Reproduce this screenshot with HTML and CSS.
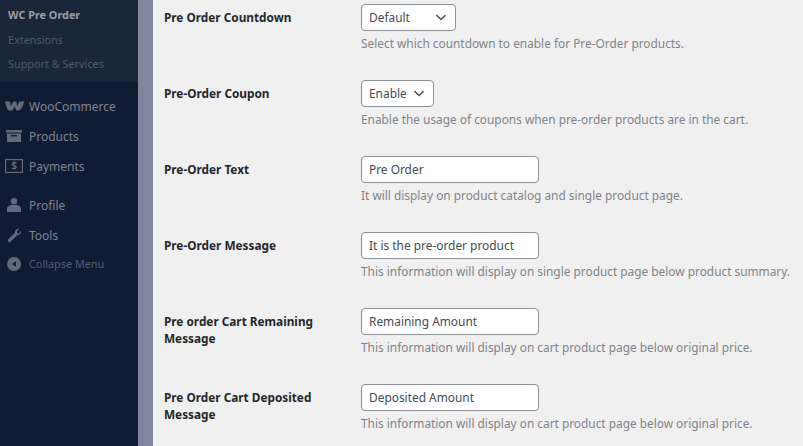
FILE: index.html
```
<!DOCTYPE html>
<html lang="en">
<head>
<meta charset="utf-8">
<title>WC Pre Order</title>
<link rel="stylesheet" href="styles.css">
</head>
<body>
<div class="page">
  <nav class="sidebar">
    <ul class="submenu">
      <li class="sub current">WC Pre Order</li>
      <li class="sub">Extensions</li>
      <li class="sub">Support &amp; Services</li>
    </ul>
    <ul class="menu first">
      <li class="item"><span class="ico"><svg width="19" height="10" viewBox="0 0 19 10"><path d="M0 .5h5l.8 4.800L8.300.5h3l.9 4.800L14.500.5H19c-.5 4-3 9-5.500 9h-2.300l-1.300-4-2.600 4H4.800c-1.800 0-2.500-1-3-3z" fill="#636b7b"/></svg></span>WooCommerce</li>
      <li class="item"><span class="ico"><svg width="16" height="12" viewBox="0 0 16 12"><path d="M0 0h16v2.500H0zM1 3.500h14V12H1zm4 1.500v1.500h6V5z" fill="#636b7b" fill-rule="evenodd"/></svg></span>Products</li>
      <li class="item"><span class="ico"><svg width="18" height="14" viewBox="0 0 18 14"><rect x=".6" y=".6" width="16.800" height="12.800" fill="none" stroke="#636b7b" stroke-width="1.200"/></svg><span class="dollar">$</span></span>Payments</li>
    </ul>
    <ul class="menu">
      <li class="item"><span class="ico"><svg width="14" height="14" viewBox="0 0 14 14"><circle cx="7" cy="3.300" r="3.200" fill="#636b7b"/><path d="M0 14v-3C0 8 3 7 4.500 7h5C11 7 14 8 14 11v3z" fill="#636b7b"/></svg></span>Profile</li>
      <li class="item"><span class="ico"><svg width="15" height="15" viewBox="0 0 16 16"><path d="M15 3.200c.5 2-1.300 4.600-4 4.200L4 14.500c-.8.800-2 .800-2.700.100s-.6-1.900.2-2.700l7.100-6.900C8 2.300 10.800.300 13 1l-2.500 2.500.4 1.900 1.800.4z" fill="#636b7b"/></svg></span>Tools</li>
      <li class="item collapse"><span class="ico"><svg width="14" height="14" viewBox="0 0 14 14"><circle cx="7" cy="7" r="7" fill="#636b7b"/><path d="M9 4.200v5.600L4.800 7z" fill="#101c33"/></svg></span>Collapse Menu</li>
    </ul>
  </nav>
  <div class="strip"></div>
  <main class="content">
    <div class="row">
      <div class="label">Pre Order Countdown</div>
      <div class="field">
        <div class="select wide"><span>Default</span><svg width="12" height="7" viewBox="0 0 12 7"><path d="M1.500 1.200 6 5.500l4.500-4.300" fill="none" stroke="#50575e" stroke-width="1.600"/></svg></div>
        <p class="desc">Select which countdown to enable for Pre-Order products.</p>
      </div>
    </div>
    <div class="row">
      <div class="label">Pre-Order Coupon</div>
      <div class="field">
        <div class="select narrow"><span>Enable</span><svg width="12" height="7" viewBox="0 0 12 7"><path d="M1.500 1.200 6 5.500l4.500-4.300" fill="none" stroke="#50575e" stroke-width="1.600"/></svg></div>
        <p class="desc">Enable the usage of coupons when pre-order products are in the cart.</p>
      </div>
    </div>
    <div class="row">
      <div class="label">Pre-Order Text</div>
      <div class="field">
        <input class="input" type="text" value="Pre Order">
        <p class="desc">It will display on product catalog and single product page.</p>
      </div>
    </div>
    <div class="row">
      <div class="label">Pre-Order Message</div>
      <div class="field">
        <input class="input" type="text" value="It is the pre-order product">
        <p class="desc">This information will display on single product page below product summary.</p>
      </div>
    </div>
    <div class="row">
      <div class="label">Pre order Cart Remaining Message</div>
      <div class="field">
        <input class="input" type="text" value="Remaining Amount">
        <p class="desc">This information will display on cart product page below original price.</p>
      </div>
    </div>
    <div class="row">
      <div class="label">Pre Order Cart Deposited Message</div>
      <div class="field">
        <input class="input" type="text" value="Deposited Amount">
        <p class="desc">This information will display on cart product page below original price.</p>
      </div>
    </div>
  </main>
</div>
</body>
</html>
```
FILE: styles.css
```
* { box-sizing: border-box; }
html, body { margin: 0; padding: 0; height: 446px; overflow: hidden; }
body { font-family: "Noto Sans", "Open Sans", sans-serif; font-size: 12px; color: #2c3338; background: #f0f0f1; }
.page { display: flex; height: 446px; }
.sidebar { width: 138px; flex: none; background: #101c33; color: #8b919b; }
ul { list-style: none; margin: 0; padding: 0; }
.submenu { height: 82px; background: #1a2639; padding-top: 3px; }
.sub { height: 24.500px; line-height: 24px; padding-left: 8px; font-size: 10.850px; color: #4e586a; }
.sub.current { color: #9a9fa7; font-weight: 700; }
.menu { padding-top: 9px; }
.menu.first { padding-top: 9px; }
.menu + .menu { padding-top: 9px; }
.item { display: flex; align-items: center; height: 30px; font-size: 12px; color: #7f858f; }
.ico { position: relative; width: 29px; flex: none; display: flex; justify-content: center; padding-right: 1px; }
.dollar { position: absolute; left: 0; width: 28px; top: -1px; text-align: center; font-size: 10px; font-weight: 700; color: #636b7b; }
.collapse { font-size: 10.850px; color: #545c6b; height: 27px; }
.strip { width: 15px; flex: none; background: #7f869c; }
.content { flex: 1; padding: 4px 0 0 11px; min-width: 0; }
.row { display: flex; height: 76px; }
.label { width: 197px; flex: none; padding: 5px 20px 0 0; font-size: 11.800px; line-height: 17px; font-weight: 700; color: #22282c; }
.field { flex: 1; min-width: 0; }
.select, .input { height: 27px; background: #fff; border: 1px solid #8c8f94; border-radius: 4px; font-family: inherit; font-size: 11.900px; color: #454c52; }
.select { display: flex; align-items: center; justify-content: space-between; padding: 0 8px 2px 7px; }
.select svg { margin-top: 2px; }
.wide { width: 95px; }
.narrow { width: 73px; }
.input { display: block; width: 178px; padding: 0 7px 2px; }
.desc { margin: 4px 0 0 0; font-size: 11.860px; line-height: 17px; color: #7f8388; white-space: nowrap; }
```
